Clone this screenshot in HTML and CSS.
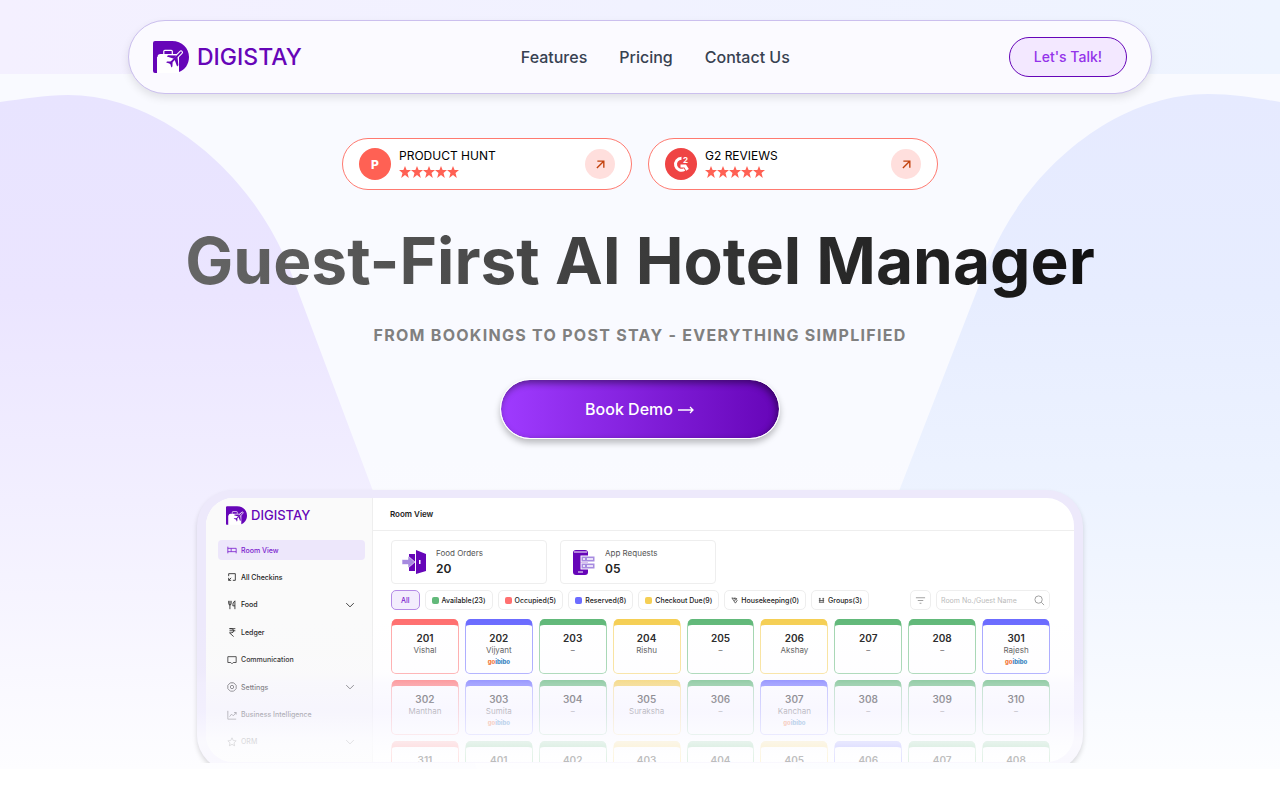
FILE: index.html
```html
<!DOCTYPE html>
<html lang="en">
<head>
    <meta charset="UTF-8">
    <meta name="viewport" content="width=device-width, initial-scale=1.0">
    <title>Digistay</title>
    <link rel="stylesheet" href="styles.css">
</head>
<body>
    <!-- Shared icons -->
    <svg class="sprite" aria-hidden="true">
        <symbol id="mark" viewBox="0 0 36 32">
            <path fill="#6605b8" d="M0 2a2 2 0 0 1 2-2h17c10 0 17 7 17 16 0 7-4 13-10 15V16H4v16H2a2 2 0 0 1-2-2z"/>
            <path fill="#fff" d="M4.500 16a3 3 0 0 1 3-3H23a3 3 0 0 1 3 3v16H4.500z"/>
            <path fill="none" stroke="#fff" stroke-width="1.200" d="M10.800 13v-2.700a1 1 0 0 1 1-1h6.500a1 1 0 0 1 1 1V13"/>
            <path fill="none" stroke="#fff" stroke-width="4" stroke-linecap="round" d="M28 11.300l-5 5"/>
            <path fill="none" stroke="#6605b8" stroke-width="1.800" stroke-linecap="round" d="M28 11.300L17.500 22"/>
            <path fill="#6605b8" d="M23.500 14.500l-8.500-.3-1.200 1.300 7.200 2.300zM24.500 16l.9 8.300-1.300 1.300-2.600-7zM18.500 20.500l-4.500.1-.8 1 4 1.200 1.200 3.600 1-.9.200-4z"/>
        </symbol>
        <symbol id="star" viewBox="0 0 12 12">
            <path d="M6 0l1.600 4H12L8.500 6.900 9.800 12 6 9.100 2.200 12l1.300-5.100L0 4h4.400z"/>
        </symbol>
        <symbol id="arrow" viewBox="0 0 10 10">
            <path fill="none" stroke="#c2410c" stroke-width="1.500" d="M1 9l7.500-7.500M1.500 1.300h7.200v7.200"/>
        </symbol>
        <symbol id="chevron" viewBox="0 0 8 8">
            <path fill="none" stroke="#444" stroke-width=".8" d="M1 2.500l3 3 3-3"/>
        </symbol>
    </svg>

    <div class="page">
        <svg class="backdrop" viewBox="0 0 1280 769" preserveAspectRatio="none" aria-hidden="true">
            <defs>
                <linearGradient id="band"><stop offset="0" stop-color="#f4f0ff"/><stop offset="1" stop-color="#eef4ff"/></linearGradient>
                <linearGradient id="left" x1="0" y1="0" x2="0" y2="1">
                    <stop offset="0" stop-color="#e8e4ff"/><stop offset=".3" stop-color="#ebe5ff"/>
                    <stop offset=".6" stop-color="#f2efff"/><stop offset="1" stop-color="#fdfdff"/>
                </linearGradient>
                <linearGradient id="right" x1="0" y1="0" x2="0" y2="1">
                    <stop offset="0" stop-color="#e6eaff"/><stop offset=".3" stop-color="#e7edff"/>
                    <stop offset=".6" stop-color="#edf3ff"/><stop offset="1" stop-color="#fcfdff"/>
                </linearGradient>
            </defs>
            <rect width="1280" height="74" fill="url(#band)"/>
            <path fill="url(#left)" d="M0 102C23 99 44 95 68 95c90 0 184 76 222 175l83 221 104 278H0z"/>
            <path fill="url(#right)" d="M1280 102c-24-4-46-8-72-8-92 0-186 76-223 176l-86 221-104 278h485z"/>
        </svg>

        <header class="navbar">
            <a class="logo" href="#"><svg class="logo-mark"><use href="#mark"/></svg>DIGISTAY</a>
            <nav class="nav-links">
                <a href="#">Features</a>
                <a href="#">Pricing</a>
                <a href="#">Contact Us</a>
            </nav>
            <a class="talk-btn" href="#">Let's Talk!</a>
        </header>

        <main class="hero">
            <div class="badges">
                <a class="badge" href="#">
                    <span class="badge-icon">P</span>
                    <span class="badge-text">PRODUCT HUNT
                        <span class="stars"><svg><use href="#star"/></svg><svg><use href="#star"/></svg><svg><use href="#star"/></svg><svg><use href="#star"/></svg><svg><use href="#star"/></svg></span>
                    </span>
                    <span class="badge-arrow"><svg><use href="#arrow"/></svg></span>
                </a>
                <a class="badge" href="#">
                    <span class="badge-icon g2">
                        <svg viewBox="0 0 18 18">
                            <path fill="none" stroke="#fff" stroke-width="3" d="M9.500 3.300A6 6 0 1 0 12.500 14.500"/>
                            <path fill="#fff" d="M8.500 9.500h5.500l2.800 4.600-2.600 1.600-1.800-3.300H8.500z"/>
                            <text x="11" y="7.500" font-size="8" font-weight="700" fill="#fff">2</text>
                        </svg>
                    </span>
                    <span class="badge-text">G2 REVIEWS
                        <span class="stars"><svg><use href="#star"/></svg><svg><use href="#star"/></svg><svg><use href="#star"/></svg><svg><use href="#star"/></svg><svg><use href="#star"/></svg></span>
                    </span>
                    <span class="badge-arrow"><svg><use href="#arrow"/></svg></span>
                </a>
            </div>

            <h1>Guest-First AI Hotel Manager</h1>
            <p class="tagline">FROM BOOKINGS TO POST STAY - EVERYTHING SIMPLIFIED</p>
            <button class="demo-btn" type="button">Book Demo
                <svg viewBox="0 0 18 12"><path fill="none" stroke="#fff" stroke-width="1.300" d="M1 7h15M13 4l3 3-3 3"/></svg>
            </button>

            <div class="preview">
                <div class="screen">
                    <aside class="sidebar">
                        <a class="logo small" href="#"><svg class="logo-mark"><use href="#mark"/></svg>DIGISTAY</a>
                        <nav class="menu">
                            <a class="active" href="#"><svg viewBox="0 0 12 10"><path d="M1 1v8M1 7h10M11 9V3H1M5 3v4"/></svg>Room View</a>
                            <a href="#"><svg viewBox="0 0 12 12"><path d="M2 5V2h8v8H7M5 7L2 10M2 7v3h3"/></svg>All Checkins</a>
                            <a href="#"><svg viewBox="0 0 12 12"><path d="M2 1v3q0 2 1.500 2T5 4V1M3.500 1v10M9.500 11V1q-3 2-2.500 6h2.500"/></svg>Food<svg class="chev"><use href="#chevron"/></svg></a>
                            <a href="#"><svg viewBox="0 0 12 12"><path d="M3 2h7M3 4.500h7M3 2h2q3 0 3 2.500T5 7H3l5 4.500"/></svg>Ledger</a>
                            <a href="#"><svg viewBox="0 0 12 12"><path d="M1 2h10v7H7.500L6 10.500 4.500 9H1z"/></svg>Communication</a>
                            <a href="#"><svg viewBox="0 0 12 12"><path d="M4 1h4l3 3v4l-3 3H4L1 8V4z"/><circle cx="6" cy="6" r="2"/></svg>Settings<svg class="chev"><use href="#chevron"/></svg></a>
                            <a href="#"><svg viewBox="0 0 12 12"><path d="M1 1v10h10M3 8l2.500-3 2 2L11 3M8.500 3H11v2.500"/></svg>Business Intelligence</a>
                            <a href="#"><svg viewBox="0 0 12 12"><path d="M6 1l1.500 3.200 3.500.4-2.600 2.400.7 3.500L6 8.800l-3.100 1.700.7-3.500L1 4.600l3.500-.4z"/></svg>ORM<svg class="chev"><use href="#chevron"/></svg></a>
                        </nav>
                    </aside>

                    <section class="board">
                        <h2>Room View</h2>
                        <div class="board-body">
                            <div class="stats">
                                <div class="stat">
                                    <svg viewBox="0 0 26 26"><path fill="#6605b8" d="M7 5h6v17H7z"/><path fill="#6605b8" d="M14 1l10 4v17l-10 3z"/><path fill="#fff" d="M17 11h1.500v4H17z"/><path fill="#a78be0" stroke="#fff" stroke-width=".6" d="M0 10.500h6V7l7 6-7 6v-3.500H0z"/></svg>
                                    <div><span>Food Orders</span><strong>20</strong></div>
                                </div>
                                <div class="stat">
                                    <svg viewBox="0 0 26 26"><rect x="2" y="1" width="15" height="25" rx="3" fill="#6605b8"/><path stroke="#fff" stroke-width="1" d="M3 3h13M7 23h5"/><g fill="#a78be0" stroke="#fff"><rect x="10" y="7" width="14" height="6"/><rect x="10" y="14" width="14" height="6"/></g><path stroke="#fff" stroke-width="1.500" d="M12 10h2m2 0h6M12 17h2m2 0h6"/></svg>
                                    <div><span>App Requests</span><strong>05</strong></div>
                                </div>
                            </div>

                            <div class="filters">
                                <button class="all" type="button">All</button>
                                <button type="button"><i class="dot green"></i>Available(23)</button>
                                <button type="button"><i class="dot red"></i>Occupied(5)</button>
                                <button type="button"><i class="dot blue"></i>Reserved(8)</button>
                                <button type="button"><i class="dot yellow"></i>Checkout Due(9)</button>
                                <button type="button"><svg viewBox="0 0 8 8"><path d="M1 1l4 1 2 2-2 3-2-3zM4 2V1l3 1M3 4l3-1"/></svg>Housekeeping(0)</button>
                                <button type="button"><svg viewBox="0 0 8 8"><path d="M1 2h2m2 0h2M1 4h6M1 6h6M2 1v5m4-5v5"/></svg>Groups(3)</button>
                                <button class="sort" type="button" aria-label="Sort"><svg viewBox="0 0 12 8"><path d="M1 1h10M3 4h6M5 7h2"/></svg></button>
                                <label class="search">
                                    <input type="text" placeholder="Room No./Guest Name" aria-label="Room number or guest name">
                                    <svg viewBox="0 0 12 12"><circle cx="5" cy="5" r="4"/><path d="M8 8l3 3"/></svg>
                                </label>
                            </div>

                            <div class="rooms">
                                <div class="room red"><b>201</b><span>Vishal</span></div>
                                <div class="room blue"><b>202</b><span>Vijyant</span><em>go<i>ibibo</i></em></div>
                                <div class="room green"><b>203</b><span>–</span></div>
                                <div class="room yellow"><b>204</b><span>Rishu</span></div>
                                <div class="room green"><b>205</b><span>–</span></div>
                                <div class="room yellow"><b>206</b><span>Akshay</span></div>
                                <div class="room green"><b>207</b><span>–</span></div>
                                <div class="room green"><b>208</b><span>–</span></div>
                                <div class="room blue"><b>301</b><span>Rajesh</span><em>go<i>ibibo</i></em></div>

                                <div class="room red"><b>302</b><span>Manthan</span></div>
                                <div class="room blue"><b>303</b><span>Sumita</span><em>go<i>ibibo</i></em></div>
                                <div class="room green"><b>304</b><span>–</span></div>
                                <div class="room yellow"><b>305</b><span>Suraksha</span></div>
                                <div class="room green"><b>306</b><span>–</span></div>
                                <div class="room blue"><b>307</b><span>Kanchan</span><em>go<i>ibibo</i></em></div>
                                <div class="room green"><b>308</b><span>–</span></div>
                                <div class="room green"><b>309</b><span>–</span></div>
                                <div class="room green"><b>310</b><span>–</span></div>

                                <div class="room red"><b>311</b></div>
                                <div class="room green"><b>401</b></div>
                                <div class="room green"><b>402</b></div>
                                <div class="room yellow"><b>403</b></div>
                                <div class="room green"><b>404</b></div>
                                <div class="room yellow"><b>405</b></div>
                                <div class="room blue"><b>406</b></div>
                                <div class="room green"><b>407</b></div>
                                <div class="room green"><b>408</b></div>
                            </div>
                        </div>
                    </section>
                </div>
                <div class="fade"></div>
            </div>
        </main>
    </div>
</body>
</html>
```

FILE: styles.css
```css
* {
    box-sizing: border-box;
}
body {
    font-family: Inter, "Liberation Sans", sans-serif;
    margin: 0;
    background-color: #fff;
}
a {
    color: inherit;
    text-decoration: none;
}
button, input {
    font-family: inherit;
}
.sprite {
    position: absolute;
    width: 0;
    height: 0;
}
.page {
    position: relative;
    overflow: hidden;
    padding-top: 20px;
    background: linear-gradient(#f9faff 60%, #fefeff);
}
.backdrop {
    position: absolute;
    top: 0;
    left: 0;
    width: 100%;
    height: 100%;
}

/* Navbar */
.navbar {
    position: relative;
    display: flex;
    align-items: center;
    justify-content: space-between;
    width: 80%;
    height: 74px;
    margin: 0 auto;
    padding: 0 24px;
    border: 1px solid #cbbfee;
    border-radius: 37px;
    background-color: #fbfaff;
    box-shadow: 0 4px 8px rgba(0, 0, 0, 0.1);
}
.logo {
    display: flex;
    align-items: center;
    gap: 8px;
    color: #6605b8;
    font-size: 23px;
    font-weight: 500;
}
.logo-mark {
    width: 36px;
    height: 32px;
}
.nav-links {
    display: flex;
    gap: 32px;
    color: #374151;
    font-size: 16px;
    font-weight: 500;
}
.talk-btn {
    padding: 0 24px;
    border: 1px solid #6605b8;
    border-radius: 20px;
    background-color: #f3e8ff;
    color: #9333ea;
    font-size: 14px;
    font-weight: 500;
    line-height: 38px;
}

/* Hero */
.hero {
    position: relative;
    display: flex;
    flex-direction: column;
    align-items: center;
    padding-top: 44px;
}
.badges {
    display: flex;
    gap: 16px;
}
.badge {
    display: flex;
    align-items: center;
    gap: 8px;
    width: 290px;
    height: 52px;
    padding: 0 16px;
    border: 1px solid #ff7a70;
    border-radius: 26px;
    background-color: #fff;
}
.badge-icon {
    display: flex;
    align-items: center;
    justify-content: center;
    width: 32px;
    height: 32px;
    border-radius: 50%;
    background-color: #ff6154;
    color: #fff;
    font-size: 12px;
    font-weight: 800;
}
.badge-icon svg {
    width: 18px;
    height: 18px;
}
.g2 {
    background-color: #ef4444;
}
.badge-text {
    flex: 1;
    color: #000;
    font-size: 12px;
    line-height: 16px;
}
.stars {
    display: flex;
    padding: 2px 0;
}
.stars svg {
    width: 12px;
    height: 12px;
    fill: #ff6154;
}
.badge-arrow {
    display: flex;
    align-items: center;
    justify-content: center;
    width: 30px;
    height: 30px;
    border-radius: 50%;
    background-color: #ffdfdd;
}
.badge-arrow svg {
    width: 9px;
    height: 9px;
}
h1 {
    margin: 31px 0 0;
    background: linear-gradient(to right, #666, #111);
    -webkit-background-clip: text;
    background-clip: text;
    color: transparent;
    font-size: 64px;
    font-weight: 700;
    line-height: 80px;
    text-align: center;
}
.tagline {
    margin: 22px 0 0;
    color: #808080;
    font-size: 16px;
    font-weight: 700;
    letter-spacing: 0.08em;
    line-height: 24px;
}
.demo-btn {
    display: flex;
    align-items: center;
    justify-content: center;
    gap: 4px;
    width: 280px;
    height: 60px;
    margin-top: 32px;
    border: 1px solid #fff;
    border-radius: 30px;
    background: linear-gradient(to right, #9f3bff, #6605b8) padding-box;
    box-shadow: 0 4px 6px rgba(0, 0, 0, 0.25), inset -2px 3px 7px rgba(0, 0, 0, 0.45);
    color: #fff;
    font-size: 16px;
    font-weight: 500;
}
.demo-btn svg {
    width: 18px;
    height: 12px;
}

/* Dashboard preview, the last 8px of the frame are cut off */
.preview {
    position: relative;
    width: calc(100% - 64px);
    max-width: 886px;
    margin: 51px 0 -2px;
    clip-path: inset(-20px -20px 8px);
}
.screen {
    display: flex;
    height: 281px;
    border: 9px solid #ede9fb;
    border-top-width: 8px;
    border-radius: 36px;
    background-color: #fff;
    box-shadow: 0 3px 5px rgba(0, 0, 0, 0.15);
    overflow: hidden;
}
.fade {
    position: absolute;
    inset: 0;
    border-radius: 36px;
    pointer-events: none;
    background: linear-gradient(rgba(250, 249, 255, 0) 130px, rgba(247, 245, 255, 0.14) 182px, rgba(246, 244, 255, 0.42) 194px, rgba(245, 243, 255, 0.65) 222px, rgba(252, 252, 255, 0.86) 252px, rgba(254, 254, 255, 0.7) 268px);
}
.sidebar {
    width: 167px;
    flex: none;
    padding: 8px 7px 0 12px;
    border-right: 1px solid #eee;
    background-color: #fafafa;
}
.small {
    gap: 4px;
    margin-left: 8px;
    font-size: 13px;
    line-height: 19px;
}
.small .logo-mark {
    width: 21px;
    height: 19px;
}
.menu {
    display: flex;
    flex-direction: column;
    justify-content: space-between;
    height: 212px;
    margin-top: 15px;
    color: #222;
    font-size: 7px;
    font-weight: 500;
}
.menu a {
    display: flex;
    align-items: center;
    gap: 4px;
    height: 20px;
    padding: 0 10px 0 9px;
    border-radius: 4px;
}
.menu .active {
    background-color: #ede7fb;
    color: #7c22ce;
}
.menu svg {
    width: 10px;
    height: 10px;
    fill: none;
    stroke: currentColor;
}
.menu .chev {
    margin-left: auto;
}
.board {
    flex: 1;
    min-width: 0;
}
h2 {
    margin: 0;
    padding-left: 17px;
    border-bottom: 1px solid #eee;
    color: #222;
    font-size: 8px;
    font-weight: 600;
    line-height: 32px;
}
.board-body {
    padding: 9px 24px 0 18px;
}
.stats {
    display: flex;
    gap: 13px;
}
.stat {
    display: flex;
    align-items: center;
    gap: 8px;
    width: 156px;
    height: 44px;
    padding: 0 10px;
    border: 1px solid #eee;
    border-radius: 4px;
}
.stat svg {
    width: 26px;
    height: 26px;
}
.stat span {
    display: block;
    color: #555;
    font-size: 8px;
    line-height: 13px;
}
.stat strong {
    display: block;
    color: #222;
    font-size: 12px;
    font-weight: 600;
    line-height: 17px;
}
.filters {
    display: flex;
    gap: 5px;
    margin-top: 6px;
}
.filters button, .search {
    display: flex;
    align-items: center;
    gap: 3px;
    height: 20px;
    padding: 0 6px;
    border: 1px solid #eee;
    border-radius: 5px;
    background-color: #fff;
    color: #222;
    font-size: 7px;
    font-weight: 500;
    white-space: nowrap;
}
.filters .all {
    padding: 0 9px;
    border-color: #b48be6;
    background-color: #f3edfd;
    color: #7c22ce;
}
.filters svg {
    width: 7px;
    height: 7px;
    fill: none;
    stroke: #555;
}
.dot {
    width: 7px;
    height: 7px;
    border-radius: 2px;
    background-color: var(--status);
}
.filters .sort {
    margin-left: auto;
    padding: 0 4px;
}
.filters .sort svg, .search svg {
    width: 11px;
    height: 11px;
    stroke: #999;
}
.filters .search {
    width: 114px;
    padding: 0 4px;
}
.search input {
    flex: 1;
    min-width: 0;
    padding: 0;
    border: 0;
    outline: 0;
    background: none;
    font-size: 7px;
}
.search input::placeholder {
    color: #bbb;
}
.red {
    --status: #ff7070;
}
.blue {
    --status: #6c6cff;
}
.green {
    --status: #62b97a;
}
.yellow {
    --status: #f5cf55;
}
.rooms {
    display: grid;
    grid-template-columns: repeat(9, 1fr);
    gap: 6px;
    margin-top: 9px;
}
.room {
    height: 55px;
    padding-top: 7px;
    border: 1px solid color-mix(in srgb, var(--status) 60%, white);
    border-top: 6px solid var(--status);
    border-radius: 5px 5px 5px 5px / 8px 8px 5px 5px;
    background-color: #fff;
    color: #222;
    text-align: center;
}
.room b, .room span, .room em {
    display: block;
}
.room b {
    font-size: 10px;
    font-weight: 600;
    line-height: 12px;
}
.room span {
    color: #555;
    font-size: 8px;
    line-height: 13px;
}
.room em {
    color: #f26722;
    font-size: 6px;
    font-style: normal;
    font-weight: 800;
    line-height: 9px;
}
.room em i {
    color: #2276b9;
    font-style: normal;
}
```
